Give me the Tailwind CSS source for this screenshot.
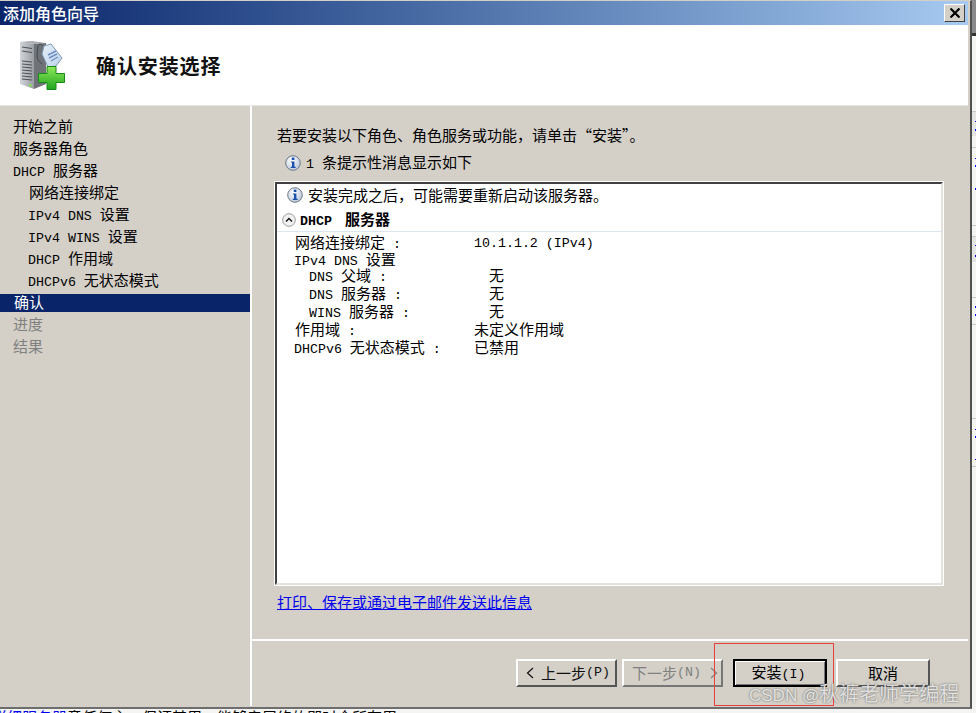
<!doctype html>
<html><head><meta charset="utf-8">
<script src="https://cdn.jsdelivr.net/npm/@tailwindcss/browser@4"></script>
</head>
<body class="m-0 bg-[#f4f4f2]">
<div class="relative w-[976px] h-[713px] overflow-hidden bg-[#f4f4f2] text-[15px] leading-[18px] text-black font-['Noto_Sans_CJK_SC','Liberation_Sans',sans-serif]">

  <!-- dialog -->
  <div class="flex flex-col w-[972px] h-[709px] bg-[#d4d0c8] border-t border-t-[#d4d0c8] border-r-2 border-r-[#505050] border-b-2 border-b-[#6e6e6e] pr-[2px]">
    <!-- title bar -->
    <div class="flex items-center justify-between h-[24px] pl-[3px] pr-[3px] bg-gradient-to-r from-[#0a246a] to-[#a6caf0] text-white text-[16px] font-medium">
      <span>添加角色向导</span>
      <div class="flex items-center justify-center w-[21px] h-[18px] bg-[#d4d0c8] border border-t-white border-l-white border-r-[#404040] border-b-[#404040]">
        <svg width="10" height="10" viewBox="0 0 10 10"><path d="M0.5 0.5 L9.5 9.5 M9.5 0.5 L0.5 9.5" stroke="#000" stroke-width="2.2"/></svg>
      </div>
    </div>
    <!-- header -->
    <div class="flex items-center h-[81px] bg-white pl-[19px] border-b border-b-[#e8e6e0]">
      <svg width="47" height="52" viewBox="0 0 47 52" class="mt-[1px] shrink-0">
        <defs>
          <linearGradient id="srv" x1="0" x2="1" y1="0" y2="0"><stop offset="0" stop-color="#d2d5d9"/><stop offset="1" stop-color="#9a9ea3"/></linearGradient>
          <linearGradient id="grn" x1="0" x2="0" y1="0" y2="1"><stop offset="0" stop-color="#8fe85a"/><stop offset="1" stop-color="#1ea61e"/></linearGradient>
          <linearGradient id="tag" x1="0" x2="1" y1="0" y2="1"><stop offset="0" stop-color="#e6eff8"/><stop offset="1" stop-color="#bcd2ea"/></linearGradient>
        </defs>
        <path d="M1 2 L15 4 L15 49 L1 44 Z" fill="url(#srv)"/>
        <path d="M1 2 L13 1 L27 3 L15 4 Z" fill="#a9adb2"/>
        <path d="M15 4 L27 3 L27 44 L15 49 Z" fill="#6f7378"/>
        <path d="M3 7 L13 8.5 M3 11 L13 12.5 M3 21 L13 22 M3 24 L13 25 M3 27 L13 28 M3 30 L13 31 M3 33 L13 34 M3 36 L13 37 M3 39 L13 40" stroke="#4d5257" stroke-width="1.2"/>
        <rect x="10" y="44" width="2.5" height="2.5" fill="#7be04a"/>
        <path d="M24 6 Q21 2 19 6 L18 15 Q18 21 23 24" stroke="#3f4a55" stroke-width="1" fill="none"/>
        <path d="M25 6 L32 4 L43 18 L37 26 L29 27 L23 14 Z" fill="url(#tag)" stroke="#7e97b3" stroke-width="1"/>
        <path d="M29 15 L37 11 M30 18 L38 14 M32 21 L39 17" stroke="#6f8fc4" stroke-width="1.4"/>
        <path d="M28 26.5 H37 V33.5 H45.5 V42.5 H37 V49.5 H28 V42.5 H19.5 V33.5 H28 Z" fill="url(#grn)" stroke="#178a17" stroke-width="1"/>
      </svg>
      <span class="ml-[30px] mt-[2px] text-[20px] leading-[24px] font-bold tracking-[0.9px] text-[#111]">确认安装选择</span>
    </div>
    <!-- main -->
    <div class="flex flex-1 min-h-0">
      <!-- nav -->
      <nav class="flex flex-col gap-[4px] w-[250px] pt-[11px] shrink-0">
        <div class="h-[18px] pl-[13px]">开始之前</div>
        <div class="h-[18px] pl-[13px]">服务器角色</div>
        <div class="h-[18px] pl-[13px]"><span class="text-[13.3px] font-['Liberation_Mono']">DHCP </span>服务器</div>
        <div class="h-[18px] pl-[29px]">网络连接绑定</div>
        <div class="h-[18px] pl-[28px]"><span class="text-[13.3px] font-['Liberation_Mono']">IPv4 DNS </span>设置</div>
        <div class="h-[18px] pl-[28px]"><span class="text-[13.3px] font-['Liberation_Mono']">IPv4 WINS </span>设置</div>
        <div class="h-[18px] pl-[28px]"><span class="text-[13.3px] font-['Liberation_Mono']">DHCP </span>作用域</div>
        <div class="h-[18px] pl-[28px]"><span class="text-[13.3px] font-['Liberation_Mono']">DHCPv6 </span>无状态模式</div>
        <div class="h-[18px] mt-[1px] mb-[-1px] leading-[16px] pl-[14px] bg-[#0a246a] text-white">确认</div>
        <div class="h-[18px] pl-[13px] text-[#808080]">进度</div>
        <div class="h-[18px] pl-[13px] text-[#808080]">结果</div>
      </nav>
      <div class="w-[2px] bg-white shrink-0 mb-[1px]"></div>
      <!-- right -->
      <div class="flex flex-col flex-1 min-w-0">
        <div class="flex flex-col flex-1 min-h-0 pl-[23px] pr-[25px] pt-[20px]">
          <p class="pl-[2px]">若要安装以下角色、角色服务或功能，请单击“安装”。</p>
          <div class="flex items-center gap-[5px] mt-[10px] pl-[10px] h-[18px]">
            <svg width="16" height="16" viewBox="0 0 16 16"><defs><radialGradient id="inf" cx="0.4" cy="0.35" r="0.8"><stop offset="0" stop-color="#fff"/><stop offset="1" stop-color="#aebcd4"/></radialGradient></defs><circle cx="8" cy="8" r="7.3" fill="url(#inf)" stroke="#6f7a86"/><rect x="6.8" y="2.6" width="2.6" height="2.4" fill="#1a4fb0"/><path d="M5.8 6.4 H9.4 V11.8 H10.6 V13 H5.8 V11.8 H7 V7.6 H5.8 Z" fill="#1a4fb0"/></svg>
            <span><span class="text-[13.3px] font-['Liberation_Mono']">1 </span>条提示性消息显示如下</span>
          </div>
          <!-- box -->
          <div class="mt-[10px] h-[403px] bg-white border-2 border-t-[#404040] border-l-[#404040] border-r-[#e4e2dc] border-b-[#e4e2dc] outline outline-1 outline-white">
            <div class="flex items-center gap-[5px] h-[18px] mt-[2px] pl-[10px]">
              <svg width="16" height="16" viewBox="0 0 16 16"><circle cx="8" cy="8" r="7.3" fill="url(#inf)" stroke="#6f7a86"/><rect x="6.8" y="2.6" width="2.6" height="2.4" fill="#1a4fb0"/><path d="M5.8 6.4 H9.4 V11.8 H10.6 V13 H5.8 V11.8 H7 V7.6 H5.8 Z" fill="#1a4fb0"/></svg>
              <span>安装完成之后，可能需要重新启动该服务器。</span>
            </div>
            <div class="flex items-center gap-[4px] h-[18px] mt-[7px] pl-[5px] font-bold">
              <svg width="14" height="14" viewBox="0 0 14 14"><circle cx="7" cy="7" r="6.3" fill="#f2f2f2" stroke="#9a9a9a"/><path d="M4 8.5 L7 5.5 L10 8.5" stroke="#111" stroke-width="1.4" fill="none"/></svg>
              <span><span class="mr-[5px] text-[13.3px] font-['Liberation_Mono']">DHCP </span>服务器</span>
            </div>
            <div class="h-px bg-[#dce6f0] mt-[2px]"></div>
            <div class="grid grid-cols-[180px_1fr] pl-[17px] pt-px">
              <div class="h-[17px] pl-px">网络连接绑定<span class="font-['Liberation_Mono'] text-[13.3px]"> :</span></div>
              <div class="h-[17px] pt-[2px] font-['Liberation_Mono'] text-[13.3px]">10.1.1.2 (IPv4)</div>
              <div class="h-[16px] col-span-2"><span class="font-['Liberation_Mono'] text-[13.3px]">IPv4 DNS </span>设置</div>
              <div class="h-[18px] pl-[15px]"><span class="font-['Liberation_Mono'] text-[13.3px]">DNS </span>父域<span class="font-['Liberation_Mono'] text-[13.3px]"> :</span></div>
              <div class="h-[18px] pl-[15px]">无</div>
              <div class="h-[18px] pl-[15px]"><span class="font-['Liberation_Mono'] text-[13.3px]">DNS </span>服务器<span class="font-['Liberation_Mono'] text-[13.3px]"> :</span></div>
              <div class="h-[18px] pl-[15px]">无</div>
              <div class="h-[18px] pl-[15px]"><span class="font-['Liberation_Mono'] text-[13.3px]">WINS </span>服务器<span class="font-['Liberation_Mono'] text-[13.3px]"> :</span></div>
              <div class="h-[18px] pl-[15px]">无</div>
              <div class="h-[18px] pl-px">作用域<span class="font-['Liberation_Mono'] text-[13.3px]"> :</span></div>
              <div class="h-[18px]">未定义作用域</div>
              <div class="h-[18px]"><span class="font-['Liberation_Mono'] text-[13.3px]">DHCPv6 </span>无状态模式<span class="font-['Liberation_Mono'] text-[13.3px]"> :</span></div>
              <div class="h-[18px]">已禁用</div>
            </div>
          </div>
          <a class="mt-[8px] pl-[2px] text-[#0000ee] underline">打印、保存或通过电子邮件发送此信息</a>
        </div>
        <!-- footer -->
        <div class="flex h-[68px] shrink-0 border-t-2 border-t-white pt-[18px] pl-[264px] gap-[5px]">
          <button class="flex items-center w-[101px] h-[28px] pl-[8px] bg-[#d4d0c8] border-2 border-t-white border-l-white border-r-[#555] border-b-[#555] text-[#111] whitespace-nowrap">
            <svg width="8" height="12" viewBox="0 0 8 12" class="mr-[7px] shrink-0"><path d="M7 1 L1.5 6 L7 11" stroke="#111" stroke-width="1.2" fill="none"/></svg>上一步<span class="font-['Liberation_Mono'] text-[13.3px]">(P)</span>
          </button>
          <button class="flex items-center w-[101px] h-[28px] pl-[8px] bg-[#d4d0c8] border-2 border-t-white border-l-white border-r-[#777] border-b-[#777] text-[#808080] whitespace-nowrap">
            下一步<span class="font-['Liberation_Mono'] text-[13.3px]">(N)</span>
            <svg width="8" height="12" viewBox="0 0 8 12" class="ml-[9px] shrink-0"><path d="M1 1 L6.5 6 L1 11" stroke="#808080" stroke-width="1.2" fill="none"/></svg>
          </button>
          <button class="ml-[5px] w-[94px] h-[28px] pr-[3px] bg-[#d4d0c8] border-2 border-black shadow-[inset_1px_1px_0_#fff,inset_-1px_-1px_0_#777] whitespace-nowrap">安装<span class="font-['Liberation_Mono'] text-[13.3px]">(I)</span></button>
          <button class="ml-[4px] w-[94px] h-[28px] bg-[#d4d0c8] border-2 border-t-white border-l-white border-r-[#555] border-b-[#555]">取消</button>
        </div>
      </div>
    </div>
  </div>

  <!-- clipped page text below the dialog -->
  <div class="absolute left-0 top-[709px] w-[972px] h-[4px] overflow-hidden whitespace-nowrap">
    <div class="ml-[-8px] mt-[-1px]"><span class="text-[#0000ee]">详细服务器</span><span>意任何主，保证其用，能够亲属络的即时合所有用。</span></div>
  </div>

  <!-- strip of the window behind, right of the dialog -->
  <div class="absolute left-[972px] top-0 w-[4px] h-[713px] overflow-hidden">
    <div class="absolute top-0 left-0 w-full h-[33px] bg-[#8a8a8a]"></div>
    <div class="absolute top-[33px] left-0 w-full h-[3px] bg-[#333]"></div>
    <div class="absolute top-[111px] left-0 w-full h-[25px] bg-[#e4e4e2] border-t border-t-[#c8c8c8]"></div>
    <div class="absolute top-[147px] left-0 w-full h-px bg-[#c8c8c8]"></div>
    <div class="absolute top-[225px] left-0 w-full h-px bg-[#c8c8c8]"></div>
    <div class="absolute top-[236px] left-0 w-full h-[26px] bg-[#e4e4e2] border-t border-t-[#c8c8c8]"></div>
    <div class="absolute top-[297px] left-0 w-full h-px bg-[#c8c8c8]"></div>
    <div class="absolute top-[324px] left-0 w-full h-px bg-[#c8c8c8]"></div>
    <div class="absolute top-[418px] left-0 w-full h-px bg-[#c8c8c8]"></div>
    <div class="absolute top-[466px] left-0 w-full h-px bg-[#c8c8c8]"></div>
    <div class="absolute top-[121px] left-[3px] w-px h-px bg-[#0000ee]"></div>
    <div class="absolute top-[129px] left-[3px] w-[1px] h-[2px] bg-[#0000ee]"></div>
    <div class="absolute top-[158px] left-[3px] w-px h-px bg-[#0000ee]"></div>
    <div class="absolute top-[165px] left-[3px] w-px h-[2px] bg-[#0000ee]"></div>
    <div class="absolute top-[188px] left-[3px] w-px h-[2px] bg-[#0000ee]"></div>
    <div class="absolute top-[245px] left-[3px] w-px h-px bg-[#0000ee]"></div>
    <div class="absolute top-[255px] left-[3px] w-px h-[2px] bg-[#0000ee]"></div>
    <div class="absolute top-[306px] left-[3px] w-px h-[2px] bg-[#0000ee]"></div>
    <div class="absolute top-[314px] left-[3px] w-px h-[2px] bg-[#0000ee]"></div>
    <div class="absolute top-[429px] left-[3px] w-px h-px bg-[#0000ee]"></div>
    <div class="absolute top-[436px] left-[3px] w-px h-[2px] bg-[#0000ee]"></div>
    <div class="absolute top-[459px] left-[3px] w-px h-px bg-[#0000ee]"></div>
  </div>

  <!-- red annotation -->
  <div class="absolute left-[714px] top-[643px] w-[120px] h-[63px] border border-[#e8403c]"></div>
  <!-- watermark -->
  <div class="absolute left-[749px] top-[680px] text-[20px] leading-[26px] whitespace-nowrap text-[#eeeeee]/90 [text-shadow:0_0_2px_rgba(70,70,70,0.9)] font-['Noto_Sans_CJK_SC',sans-serif]"><span class="text-[17px] font-['Liberation_Sans']">CSDN @</span>秋裤老师学编程</div>
</div>
</body></html>
